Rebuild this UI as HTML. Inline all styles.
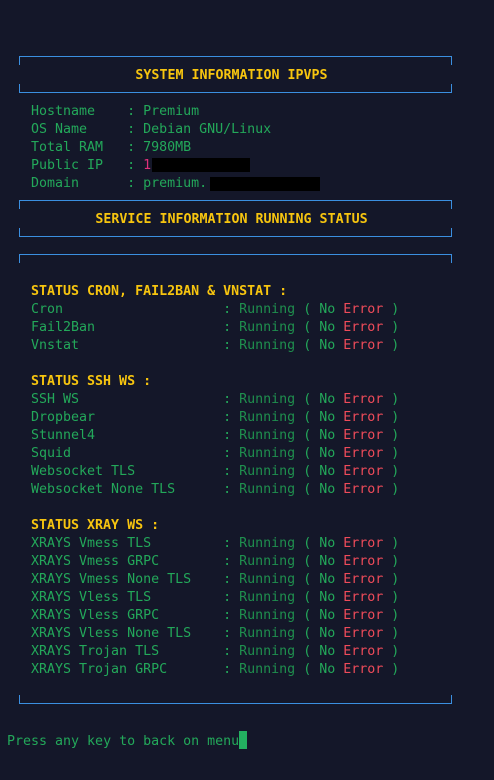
<!DOCTYPE html>
<html><head><meta charset="utf-8"><style>
html,body{margin:0;padding:0;background:#141729;width:494px;height:780px;overflow:hidden}
body{position:relative;font-family:"DejaVu Sans Mono","Liberation Mono",monospace;font-size:13.3px;color:#23a85a}
.l{position:absolute;left:31px;height:18px;line-height:18px;white-space:pre;margin-top:2px}
.y{color:#f7c50f;font-weight:bold}
.r{color:#1f8f4e}
.e{color:#ef4b5a}
.t{position:absolute;left:19px;width:425px;text-align:center;line-height:18px;color:#f7c50f;font-weight:bold;white-space:pre;margin-top:2px}
.top{position:absolute;left:19px;width:431px;height:8px;border:solid #3b8fe0;border-width:1.5px 1.5px 0 1.5px}
.bot{position:absolute;left:19px;width:431px;height:8px;border:solid #3b8fe0;border-width:0 1.5px 1.5px 1.5px}
.blk{position:absolute;background:#000}
</style></head><body>
<div class="top" style="top:56px"></div>
<div class="t" style="top:65px">SYSTEM INFORMATION IPVPS</div>
<div class="bot" style="top:84px"></div>

<div class="l" style="top:101px">Hostname    : Premium</div>
<div class="l" style="top:119px">OS Name     : Debian GNU/Linux</div>
<div class="l" style="top:137px">Total RAM   : 7980MB</div>
<div class="l" style="top:155px">Public IP   : <span style="color:#e0307a">10</span></div>
<div class="blk" style="left:152px;top:158px;width:98px;height:14px"></div>
<div class="l" style="top:173px">Domain      : premium.</div>
<div class="blk" style="left:210px;top:177px;width:110px;height:14px"></div>

<div class="top" style="top:200px"></div>
<div class="t" style="top:209px">SERVICE INFORMATION RUNNING STATUS</div>
<div class="bot" style="top:228px"></div>

<div class="top" style="top:254px"></div>

<div class="l y" style="top:281px">STATUS CRON, FAIL2BAN &amp; VNSTAT :</div>
<div class="l" style="top:299px">Cron                    : <span class="r">Running</span> ( No <span class="e">Error</span> )</div>
<div class="l" style="top:317px">Fail2Ban                : <span class="r">Running</span> ( No <span class="e">Error</span> )</div>
<div class="l" style="top:335px">Vnstat                  : <span class="r">Running</span> ( No <span class="e">Error</span> )</div>

<div class="l y" style="top:371px">STATUS SSH WS :</div>
<div class="l" style="top:389px">SSH WS                  : <span class="r">Running</span> ( No <span class="e">Error</span> )</div>
<div class="l" style="top:407px">Dropbear                : <span class="r">Running</span> ( No <span class="e">Error</span> )</div>
<div class="l" style="top:425px">Stunnel4                : <span class="r">Running</span> ( No <span class="e">Error</span> )</div>
<div class="l" style="top:443px">Squid                   : <span class="r">Running</span> ( No <span class="e">Error</span> )</div>
<div class="l" style="top:461px">Websocket TLS           : <span class="r">Running</span> ( No <span class="e">Error</span> )</div>
<div class="l" style="top:479px">Websocket None TLS      : <span class="r">Running</span> ( No <span class="e">Error</span> )</div>

<div class="l y" style="top:515px">STATUS XRAY WS :</div>
<div class="l" style="top:533px">XRAYS Vmess TLS         : <span class="r">Running</span> ( No <span class="e">Error</span> )</div>
<div class="l" style="top:551px">XRAYS Vmess GRPC        : <span class="r">Running</span> ( No <span class="e">Error</span> )</div>
<div class="l" style="top:569px">XRAYS Vmess None TLS    : <span class="r">Running</span> ( No <span class="e">Error</span> )</div>
<div class="l" style="top:587px">XRAYS Vless TLS         : <span class="r">Running</span> ( No <span class="e">Error</span> )</div>
<div class="l" style="top:605px">XRAYS Vless GRPC        : <span class="r">Running</span> ( No <span class="e">Error</span> )</div>
<div class="l" style="top:623px">XRAYS Vless None TLS    : <span class="r">Running</span> ( No <span class="e">Error</span> )</div>
<div class="l" style="top:641px">XRAYS Trojan TLS        : <span class="r">Running</span> ( No <span class="e">Error</span> )</div>
<div class="l" style="top:659px">XRAYS Trojan GRPC       : <span class="r">Running</span> ( No <span class="e">Error</span> )</div>

<div class="bot" style="top:695px"></div>

<div class="l" style="top:731px;left:7px">Press any key to back on menu</div>
<div style="position:absolute;left:239px;top:731px;width:8px;height:18px;background:#23b060"></div>
</body></html>
